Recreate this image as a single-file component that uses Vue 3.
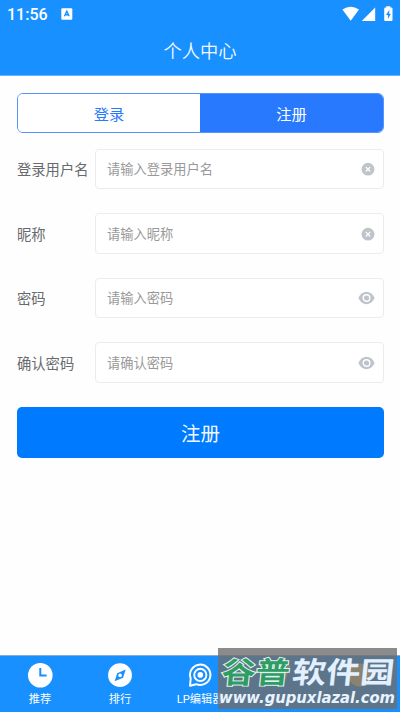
<script setup>
import { ref } from 'vue'

const fields = [
  { label: '登录用户名', hint: '请输入登录用户名', icon: 'clear', type: 'text' },
  { label: '昵称', hint: '请输入昵称', icon: 'clear', type: 'text' },
  { label: '密码', hint: '请输入密码', icon: 'eye', type: 'password' },
  { label: '确认密码', hint: '请确认密码', icon: 'eye', type: 'password' },
]
const tabs = [
  { name: '推荐', icon: 'clock' },
  { name: '排行', icon: 'compass' },
  { name: 'LP编辑器', icon: 'chat' },
  { name: '', icon: 'send' },
  { name: '', icon: 'round' },
]
const mode = ref('register')
</script>

<template>
  <div class="screen">
    <header class="header">
      <div class="status">
        <span class="time">11:56</span>
        <svg class="badge" width="12" height="12" viewBox="0 0 12 12">
          <rect x=".3" y=".2" width="11" height="11.6" rx="1" fill="#fff" />
          <path d="M3.5 8.3 5.8 3.2 8.1 8.3M4.4 6.7h2.9" fill="none" stroke="#1890ff" stroke-width="1.4" />
        </svg>
        <svg class="signals" width="52" height="17" viewBox="0 0 52 17">
          <path d="M.4 3.4Q8.7-1.8 17 3.4L8.7 14.8Z" fill="#fff" />
          <path d="M33.2 1.6V15H19.8Z" fill="#fff" />
          <path d="M44.3 1.4V.2h4v1.2h1.2q1 0 1 1V14q0 1-1 1h-6.3q-1 0-1-1V2.4q0-1 1-1Z" fill="#fff" />
          <path d="M47.4 3.8 44 9h1.9v4l3-5.3H47Z" fill="#1890ff" />
        </svg>
      </div>
      <h1 class="title">个人中心</h1>
    </header>

    <main class="content">
      <div class="segments">
        <button class="segment" :class="{ active: mode === 'login' }" @click="mode = 'login'">登录</button>
        <button class="segment" :class="{ active: mode === 'register' }" @click="mode = 'register'">注册</button>
      </div>
      <form class="form" @submit.prevent>
        <label v-for="field in fields" :key="field.label" class="row">
          <span class="label">{{ field.label }}</span>
          <span class="box">
            <input class="input" :type="field.type" :placeholder="field.hint" />
            <svg v-if="field.icon === 'clear'" width="14" height="14" viewBox="0 0 14 14">
              <circle cx="7" cy="7.2" r="6.4" fill="#bfc3cb" />
              <path d="m4.7 4.9 4.6 4.6m0-4.6L4.7 9.5" stroke="#fff" stroke-width="1.2" />
            </svg>
            <svg v-else width="17" height="14" viewBox="0 0 17 14">
              <path d="M.3 7Q3.6.8 8.5.8T16.7 7Q13.4 13.2 8.5 13.2T.3 7Z" fill="#bfc3cb" />
              <circle cx="8.5" cy="7" r="3.3" fill="none" stroke="#fff" stroke-width="1.4" />
            </svg>
          </span>
        </label>
        <button class="submit">注册</button>
      </form>
    </main>

    <nav class="tabbar">
      <div v-for="tab in tabs" :key="tab.icon" class="tab">
        <svg width="26" height="26" viewBox="0 0 26 26">
          <template v-if="tab.icon === 'clock'">
            <circle cx="13.3" cy="13.2" r="12.3" fill="#fff" />
            <path d="M13.3 6v7.5h6.3" fill="none" stroke="#1890ff" stroke-width="2" />
          </template>
          <template v-else-if="tab.icon === 'compass'">
            <circle cx="13" cy="13.2" r="11.9" fill="#fff" />
            <path d="m18.7 7.6-2.6 8.1-8.5 3.6 2.6-8.1Z" fill="#1890ff" />
            <circle cx="13.1" cy="13.4" r="1.8" fill="#fff" />
          </template>
          <template v-else-if="tab.icon === 'chat'">
            <path d="M3 23.8 3.7 16.5A10.2 10.2 0 1 1 9.2 22.2Z" fill="none" stroke="#fff" stroke-width="2" stroke-linejoin="round" />
            <circle cx="13.3" cy="12.9" r="6.1" fill="none" stroke="#fff" stroke-width="1.9" />
            <circle cx="13.3" cy="12.9" r="2.8" fill="#fff" />
          </template>
          <path v-else-if="tab.icon === 'send'" d="M1 9 24 3 16 24 11 15Z" fill="#ffd27a" />
          <circle v-else cx="13" cy="13" r="11.5" fill="#ffd27a" />
        </svg>
        <span>{{ tab.name }}</span>
      </div>
    </nav>

    <svg class="watermark" width="179" height="61" viewBox="0 0 179 61">
      <rect width="179" height="61" fill="#6e6e6e" fill-opacity=".8" />
      <g class="mark" transform="skewX(-6)">
        <text class="green" x="6.5" y="35.5" textLength="68" lengthAdjust="spacingAndGlyphs">谷普</text>
        <text class="pale" x="77" y="35.5" textLength="102" lengthAdjust="spacingAndGlyphs">软件园</text>
      </g>
      <text class="site" x="1" y="55" textLength="176" lengthAdjust="spacingAndGlyphs">www.gupuxlazal.com</text>
    </svg>
  </div>
</template>

<style>
body {
  background: #fefefe;
}
</style>

<style scoped>
.screen {
  position: relative;
  display: flex;
  flex-direction: column;
  width: 400px;
  height: 712px;
  overflow: hidden;
  background: #fefefe;
  font-family: "Noto Sans CJK SC", sans-serif;
}
.header {
  height: 75px;
  box-sizing: content-box;
  background: #1890ff;
  border-bottom: 1px solid #65b5ff;
}
.status {
  display: flex;
  align-items: center;
  height: 28px;
  padding: 0 6px 0 7px;
}
.time {
  width: 54px;
  color: #fff;
  font: 500 16px/29px Roboto, sans-serif;
}
.signals {
  margin-left: auto;
}
.title {
  margin: 0;
  color: #f4faff;
  font-size: 18.3px;
  font-weight: 350;
  line-height: 44px;
  text-align: center;
}
.content {
  flex: 1;
  padding: 17px 16px 0 17px;
}
.segments {
  display: flex;
  height: 40px;
  box-sizing: border-box;
  border: 1px solid #5594ff;
  border-radius: 6px;
  overflow: hidden;
}
button {
  padding: 0;
  border: 0;
  font-family: inherit;
}
.segment {
  flex: 1;
  background: #fff;
  color: #2979ff;
  font-size: 15.3px;
}
.segment:first-child {
  flex: 0 0 182px;
}
.segment.active {
  background: #2979ff;
  color: #fff;
}
.form {
  display: flex;
  flex-direction: column;
  gap: 24.3px;
  padding-top: 16px;
}
.row {
  display: flex;
  align-items: center;
  height: 40.2px;
}
.label {
  width: 78px;
  padding-bottom: 1px;
  color: #686a6d;
  font-size: 14.3px;
  white-space: nowrap;
}
.box {
  display: flex;
  flex: 1;
  align-items: center;
  height: 100%;
  box-sizing: border-box;
  padding: 0 8px 0 11px;
  border: 1px solid #ececec;
  border-radius: 4px;
  background: #fff;
}
.input {
  flex: 1;
  min-width: 0;
  padding: 0 0 1px;
  border: 0;
  outline: 0;
  background: transparent;
  font: 13.25px "Noto Sans CJK SC", sans-serif;
}
.input::placeholder {
  color: #999;
}
.submit {
  height: 51px;
  border-radius: 5px;
  background: #007aff;
  color: #eef7ff;
  font-size: 19.5px;
}
.tabbar {
  display: flex;
  height: 56px;
  background: #1890ff;
  border-top: 1px solid #8caccc;
}
.tab {
  display: flex;
  flex: 1;
  flex-direction: column;
  align-items: center;
  gap: 2px;
  padding-top: 6px;
  color: #fff;
  font-family: Roboto, "Noto Sans CJK SC", sans-serif;
  font-size: 11.2px;
  line-height: 20px;
  white-space: nowrap;
}
.watermark {
  position: absolute;
  top: 648px;
  left: 218px;
}
.mark text {
  font-size: 29.5px;
  font-weight: 700;
}
.green {
  fill: #2e9c65;
  stroke: #e3f3ed;
  stroke-width: 2px;
  paint-order: stroke;
}
.pale {
  fill: #e2f0ff;
}
.site {
  fill: #e8f3ff;
  font: italic 700 16px "DejaVu Sans", sans-serif;
}
</style>
